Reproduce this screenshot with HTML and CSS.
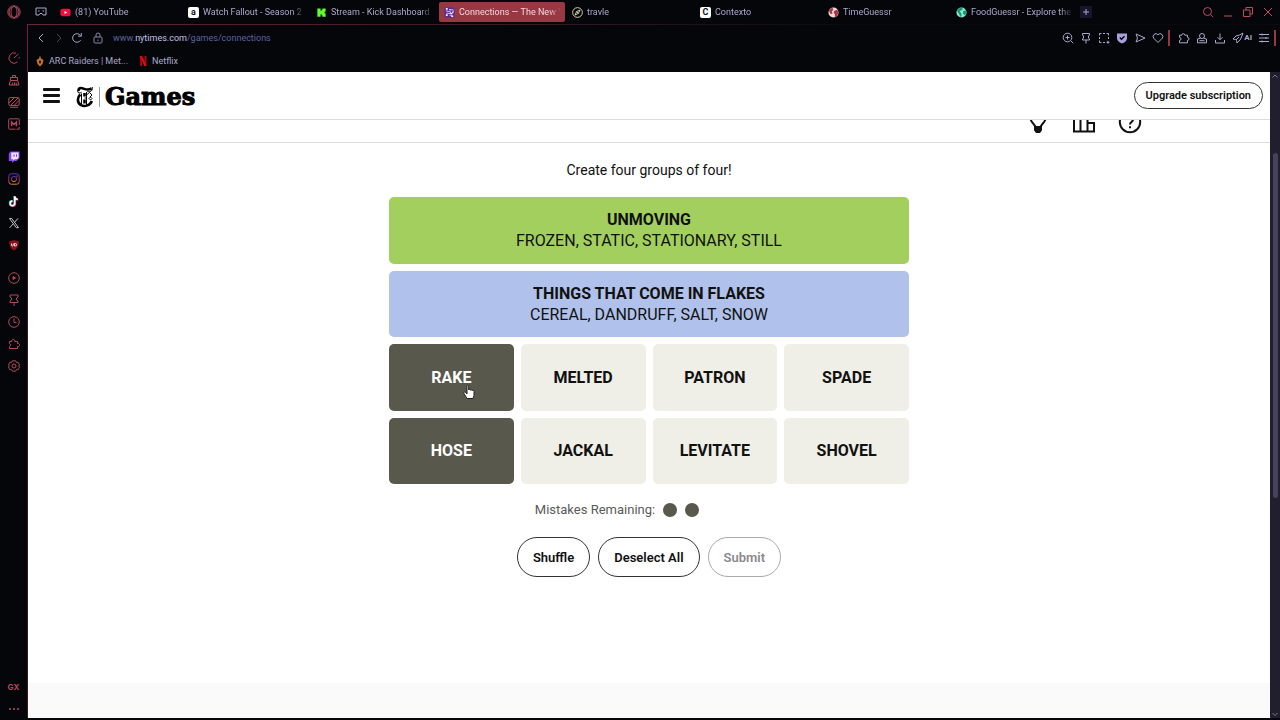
FILE: index.html
```
<!DOCTYPE html>
<html lang="en">
<head>
  <meta charset="UTF-8">
  <meta name="viewport" content="width=device-width, initial-scale=1.0">
  <title>Connections — The New York Times</title>
  <link rel="stylesheet" href="styles.css">
</head>
<body>
  <aside class="sidebar">
    <button class="side-btn opera" aria-label="Menu"><svg viewBox="0 0 14 14"><circle cx="7" cy="7" r="6.2"/><ellipse cx="7" cy="7" rx="3" ry="5.6"/><path d="M5 1.8a6 6 0 0 0 0 10.4M9 1.8a6 6 0 0 1 0 10.4"/></svg></button>
    <div class="side-group">
      <button class="side-btn" aria-label="GX Control"><svg viewBox="0 0 12 12"><path d="M9.5 10A5.2 5.2 0 1 1 8 1.2M6 6l4.5-4M11.2 5v1.5"/></svg></button>
      <button class="side-btn" aria-label="GX Cleaner"><svg viewBox="0 0 12 12"><path d="M4.5 3.5v-2h3v2M2.5 3.5h7v3h-7zM2.5 6.5L1 11h10L9.5 6.5M4 11l.6-2.5M6.5 11V8.5M8.5 11L8 8.5"/></svg></button>
      <button class="side-btn" aria-label="Limiter"><svg viewBox="0 0 12 12"><rect x=".8" y="1.5" width="10.4" height="8" rx="1.5"/><path d="M1 7l5-5M2.5 9.5L10 2M6 9.5l5-5M2 11.3h8"/></svg></button>
      <button class="side-btn" aria-label="Mods"><svg viewBox="0 0 12 12"><path d="M7.5 11.2h-6a.8.8 0 0 1-.8-.8V1.6a.8.8 0 0 1 .8-.8h9a.8.8 0 0 1 .8.8V7M8.5 11.2h2.7V9"/><path class="bold" d="M3.6 8.3V4L6 6.500 8.400 4v4.300"/></svg></button>
    </div>
    <div class="side-group">
      <button class="side-btn" aria-label="Twitch"><svg viewBox="0 0 12 12"><path class="twitch" d="M2.500.5h9v6.800L8.500 10H6.200L4 12v-2H.8V2.500z"/><path class="white" d="M3.300 1.500h7.200v5.300L9 8.200H6.700L5.200 9.500V8.200H3.300z"/><path class="twitch-bars" d="M6 3.300v2.500M8.500 3.300v2.500"/></svg></button>
      <button class="side-btn" aria-label="Instagram"><svg viewBox="0 0 12 12"><defs><linearGradient id="insta" x1="0" y1="0" x2="0" y2="1"><stop offset="0" stop-color="#5a35c0"/><stop offset=".6" stop-color="#b02a70"/><stop offset="1" stop-color="#d08a35"/></linearGradient></defs><g class="insta"><rect x=".8" y=".8" width="10.400" height="10.400" rx="2.500"/><circle cx="6" cy="6" r="2.600"/><circle cx="9" cy="3" r=".3"/></g></svg></button>
      <button class="side-btn" aria-label="TikTok"><svg viewBox="0 0 12 12"><path class="tk-cyan" d="M6.400 1v7.200a2.300 2.300 0 1 1-2.300-2.300M6.400 1.500c.2 1.600 1.300 2.600 3 2.700"/><path class="tk-red" d="M7.200 1.500v7.200a2.300 2.300 0 1 1-2.300-2.300M7.200 2c.2 1.600 1.300 2.600 3 2.700"/><path class="tk-white" d="M6.800 1.200v7.200a2.300 2.300 0 1 1-2.300-2.300M6.800 1.700c.2 1.600 1.300 2.600 3 2.700"/></svg></button>
      <button class="side-btn" aria-label="X"><svg viewBox="0 0 12 12"><g class="x-logo"><path d="M1.500 1.500h2.200l6.800 9.200H8.300zM10 1.300L6.800 5M5.200 6.800L1.700 10.800"/></g></svg></button>
      <button class="side-btn" aria-label="uBlock"><svg viewBox="0 0 12 12"><path class="shield-red" d="M6 .8c1.500 1 3 1.400 4.800 1.400 0 4-.8 7-4.800 9.300C2 9.200 1.200 6.200 1.200 2.200 3 2.200 4.500 1.800 6 .8z"/><path class="shield-mark" d="M3.500 4.500v1.700q0 .8.900.8t.9-.8V4.500M6.500 4.500V7h.8q1.300 0 1.300-1.250T7.300 4.500z"/></svg></button>
    </div>
    <div class="side-group">
      <button class="side-btn" aria-label="Player"><svg viewBox="0 0 12 12"><circle cx="6" cy="6" r="5.300"/><path class="red" d="M5 4.500v3L7.500 6z"/></svg></button>
      <button class="side-btn" aria-label="Pinboards"><svg viewBox="0 0 12 12"><path d="M2 1h8v2L8.500 4v2L10 7v1.500H2V7l1.500-1V4L2 3zM6 8.500V12"/></svg></button>
      <button class="side-btn" aria-label="History"><svg viewBox="0 0 12 12"><circle cx="6" cy="6" r="5.300"/><path d="M6 2.500V6.500h2.500"/></svg></button>
      <button class="side-btn" aria-label="Extensions"><svg viewBox="0 0 12 12"><path d="M1.500 3.500h2.300a1.600 1.600 0 1 1 3 0h2.700v2a1.600 1.600 0 1 1 0 3v2h-8V8.500a1.600 1.600 0 0 0 0-3z"/></svg></button>
      <button class="side-btn" aria-label="Settings"><svg viewBox="0 0 12 12"><path d="M4.500.8h3l.8 1.500 1.900.1L11.500 5l-.8 1 .8 1-1.300 2.600-1.900.1-.8 1.500h-3l-.8-1.500-1.900-.1L.5 7l.8-1-.8-1 1.300-2.600 1.900-.1z"/><circle cx="6" cy="6" r="2"/></svg></button>
    </div>
    <div class="side-group side-bottom">
      <button class="side-btn gx">GX</button>
      <button class="side-btn" aria-label="More"><svg viewBox="0 0 12 12"><path class="dots" d="M2 6h.1M6 6h.1M10 6h.1"/></svg></button>
    </div>
  </aside>

  <div class="browser">
    <div class="tab-bar">
      <svg class="mask-icon" viewBox="0 0 12 12"><path d="M1 2h10v7H8L7 7.500H5L4 9H1z"/><path d="M3 5h1.500M7.500 5H9"/></svg>
      <nav class="tabs">
        <a class="tab" href="#"><svg class="fav" viewBox="0 0 12 12"><rect x=".5" y="2" width="11" height="8" rx="2" fill="#f0103f"/><path d="M5 4.300v3.400L8 6z" fill="#fff"/></svg><span>(81) YouTube</span></a>
        <a class="tab" href="#"><i class="fav amazon">a</i><span>Watch Fallout - Season 2 |</span></a>
        <a class="tab" href="#"><svg class="fav" viewBox="0 0 12 12"><path d="M1.500 1.500H5v2.500h1V3h1V1.500h3.500V5h-1v2h1v3.500H7V9H6V8H5v2.500H1.500z" fill="#5dff2c"/></svg><span>Stream - Kick Dashboard</span></a>
        <a class="tab active" href="#"><svg class="fav" viewBox="0 0 12 12"><rect x=".5" y=".5" width="11" height="11" rx="1" fill="#5c2b91"/><path d="M3 2v3h4v2H3v3M6 3h4v3M6 9h3" stroke="#d5b4ff" fill="none"/><path d="M2 2h2M6 3h1M9 6h1M2 9h2M7 7h2M8 10h2" stroke="#fff" stroke-width="1.600"/></svg><span>Connections — The New Y</span></a>
        <a class="tab" href="#"><svg class="fav" viewBox="0 0 12 12"><g fill="none" stroke="#e6dfb5"><circle cx="6" cy="6" r="5.300"/><path d="M8.700 3.300L7 7 3.300 8.700 5 5zM5 5l2 2"/></g></svg><span>travle</span></a>
        <a class="tab" href="#"><i class="fav contexto">C</i><span>Contexto</span></a>
        <a class="tab" href="#"><svg class="fav" viewBox="0 0 12 12"><circle cx="6" cy="6" r="5.500" fill="#f3d9da"/><path d="M1 4l3-3 2 1-1 2-1 1 1 2-2 1zM7 4l3-1 1.500 3-2 4-2 1V8L6 6z" fill="#a83440"/></svg><span>TimeGuessr</span></a>
        <a class="tab" href="#"><svg class="fav" viewBox="0 0 12 12"><circle cx="6" cy="6" r="5.500" fill="#8be8d8"/><path d="M1 4l3-3 3 0 0 2-2 1-1 1 2 2 0 3-1 1-2-4zM8 4l3 0 .5 3-2 2-2-2z" fill="#169a68"/></svg><span>FoodGuessr - Explore the w</span></a>
      </nav>
      <button class="new-tab" aria-label="New tab"><svg viewBox="0 0 12 12"><path d="M6 3v6M3 6h6"/></svg></button>
      <div class="window-buttons">
        <button aria-label="Search tabs"><svg viewBox="0 0 12 12"><circle cx="5.500" cy="5.500" r="4"/><path d="M8.500 8.500L11 11"/></svg></button>
        <button aria-label="Minimize"><svg viewBox="0 0 12 12"><path d="M2 10h8"/></svg></button>
        <button aria-label="Restore"><svg viewBox="0 0 12 12"><path d="M1.500 4h6.500v6.500H1.500zM4 4V1.500h6.500V8H8"/></svg></button>
        <button aria-label="Close"><svg viewBox="0 0 12 12"><path d="M2 2l8 8M10 2l-8 8"/></svg></button>
      </div>
    </div>

    <div class="toolbar">
      <button aria-label="Back"><svg viewBox="0 0 12 12"><path d="M8 2L4 6l4 4"/></svg></button>
      <button class="dim" aria-label="Forward"><svg viewBox="0 0 12 12"><path d="M4 2l4 4-4 4"/></svg></button>
      <button aria-label="Reload"><svg viewBox="0 0 12 12"><path d="M9.600 8.200A4.300 4.300 0 1 1 9.500 3.600M10.300 1v3.200H7.100"/></svg></button>
      <a class="address" href="#"><svg viewBox="0 0 12 12"><rect x="2" y="5" width="8" height="6" rx="1"/><path d="M4 5V3a2 2 0 0 1 4 0v2M6 7.500v1.500"/></svg><span>www.<b>nytimes.com</b>/games/connections</span></a>
      <div class="tools">
        <button aria-label="Zoom"><svg viewBox="0 0 12 12"><circle cx="5.500" cy="5.500" r="4.300"/><path d="M8.700 8.700l2.500 2.500M3.500 5.500h4M5.500 3.500v4"/></svg></button>
        <button aria-label="Pin"><svg viewBox="0 0 12 12"><path d="M2.500 1.500h7v1.500L8.500 4v2l1 1v1h-7V7l1-1V4l-1-1zM6 8v3.500"/></svg></button>
        <button aria-label="Snapshot"><svg viewBox="0 0 12 12"><path d="M1.500 3.500v-2h2M5 1.500h2M8.500 1.500h2v2M1.500 5v2M10.500 5v2M1.500 8.500v2h2M5 10.500h2M8.500 10.300h3M10 8.800v3"/></svg></button>
        <button aria-label="Shield"><svg viewBox="0 0 12 12"><path class="shield" d="M1 1.500h10V6c0 3-2.500 4.500-5 5.500C3.500 10.500 1 9 1 6z"/><path class="tick" d="M3.800 5.500l1.700 1.700 3-3"/></svg></button>
        <button aria-label="Send"><svg viewBox="0 0 12 12"><path d="M2 2l9 4-9 4 1.500-4z"/></svg></button>
        <button aria-label="Favorite"><svg viewBox="0 0 12 12"><path d="M6 10.500L1.800 6.300a2.700 2.700 0 0 1 4.200-3.600 2.700 2.700 0 0 1 4.200 3.600z"/></svg></button>
        <i class="bar"></i>
        <button aria-label="Extensions"><svg viewBox="0 0 12 12"><path d="M1.500 3.200h2.300a1.500 1.500 0 1 1 3 0h2.700v2.200a1.500 1.500 0 1 1 0 3v2.400h-8V8.400a1.500 1.500 0 0 0 0-3z"/></svg></button>
        <button aria-label="Profile"><svg viewBox="0 0 12 12"><circle cx="6" cy="4" r="2.500"/><path d="M4.500 6.200L1.500 7v3.800h9V7l-3-.8M3.500 8.700h5"/></svg></button>
        <button aria-label="Downloads"><svg viewBox="0 0 12 12"><path d="M6 1.500v6M3.500 5.200L6 7.700l2.500-2.500M1.500 8v3h9V8"/></svg></button>
        <button class="ai"><svg viewBox="0 0 12 12"><path d="M1 7l3-3 3.500-1L11 1 9.500 5 8 8l-3 3-.5-2.500-1-1zM4 8l3-3"/></svg>AI</button>
        <button aria-label="Settings"><svg viewBox="0 0 12 12"><path d="M1 2.500h10M1 6h10M1 9.500h10M4 1.500v2M8 5v2M4 8.500v2"/></svg></button>
        <i class="bar"></i>
      </div>
    </div>

    <nav class="bookmarks">
      <a href="#"><svg viewBox="0 0 12 12"><path d="M6 .5l1 3L9.500 5l-1 4L6 11.500 3.500 9l-1-4L5 3.500z" fill="#c9702c"/><path d="M6 5l1.300 2L6 9 4.700 7z" fill="#1c1208"/></svg>ARC Raiders | Met...</a>
      <a href="#"><svg viewBox="0 0 12 12"><path d="M3 1h2v10H3zM7.500 1h2v10h-2z" fill="#a8070f"/><path d="M3 1h2.200l4.300 10H7.300z" fill="#e50914"/></svg>Netflix</a>
    </nav>

    <div class="viewport">
      <div class="page">
        <header class="site-header">
          <button class="hamburger" aria-label="Open menu"><i></i><i></i><i></i></button>
          <a class="logo" href="#" aria-label="New York Times Games">
            <svg viewBox="0 0 18 22">
              <path class="stroke-thick" d="M2.500 5C2.200 1.800 5 1.600 7.500 2.600S13 4.200 15.500 2.400"/>
              <path class="stroke-thin" d="M1.700 5C1.500 7.200 4 7.600 5.500 6.300M16.200 1c.8 3.500-1.500 5.500-5 4.300"/>
              <path class="stroke-thick" d="M4.300 8.500C1 11.500 1 17 5 19.200c4 2 9.500-.2 10.800-4.200"/>
              <path class="stroke-thin" d="M5.500 7.500v11M10.500 6v13M11 8.500l2.500-2 2.500 2.500-2 2M8.500 12h2M13 12.500l1.500-1.500 1.500 1.500-1.500 1.500z"/>
              <path class="stroke-thick" d="M8.500 7v3.500M8.500 13.500v4"/>
            </svg>
            <i></i><span>Games</span>
          </a>
          <button class="pill upgrade">Upgrade subscription</button>
        </header>

        <div class="game-tools">
          <button aria-label="Hints"><svg viewBox="0 0 24 24"><path d="M10 19c0-5-5.500-5.500-5.500-11a7.500 7.500 0 0 1 15 0c0 5.500-5.500 6-5.500 11z"/><path class="solid" d="M9 17h6v3l-1.500 2h-3L9 20z"/></svg></button>
          <button aria-label="Statistics"><svg viewBox="0 0 24 24"><path d="M2 8h6.500v13.500H2zM8.500 3h7v18.500h-7zM15.500 13H22v8.500h-6.500z"/></svg></button>
          <button aria-label="Help"><svg viewBox="0 0 24 24"><circle cx="12" cy="12" r="10.200"/><path d="M9 9.500c0-4 6-4 6 0 0 2.500-3 2.500-3 5M12 16.300v2"/></svg></button>
        </div>

        <main class="game">
          <p class="intro">Create four groups of four!</p>
          <div class="board">
            <section class="solved green"><h2>UNMOVING</h2><p>FROZEN, STATIC, STATIONARY, STILL</p></section>
            <section class="solved blue"><h2>THINGS THAT COME IN FLAKES</h2><p>CEREAL, DANDRUFF, SALT, SNOW</p></section>
            <button class="card selected" aria-pressed="true">RAKE
              <svg class="cursor" viewBox="0 0 12 16"><path d="M4 14.500L1 9.500c-.8-1.500.8-2 1.600-1L4 10V1.800c0-1.400 1.700-1.400 1.700 0V6c.3-1 1.700-.8 1.700.2.400-.8 1.700-.6 1.700.4.400-.7 1.900-.4 1.900.8v4L10 14.500z"/></svg>
            </button>
            <button class="card">MELTED</button>
            <button class="card">PATRON</button>
            <button class="card">SPADE</button>
            <button class="card selected" aria-pressed="true">HOSE</button>
            <button class="card">JACKAL</button>
            <button class="card">LEVITATE</button>
            <button class="card">SHOVEL</button>
          </div>
          <div class="mistakes"><span>Mistakes Remaining:</span><div class="bubbles"><i></i><i></i></div></div>
          <div class="actions">
            <button class="pill">Shuffle</button>
            <button class="pill">Deselect All</button>
            <button class="pill" disabled>Submit</button>
          </div>
        </main>
        <footer class="site-footer"></footer>
      </div>
      <div class="scrollbar">
        <svg viewBox="0 0 8 8"><path d="M1.500 5.500L4 3l2.500 2.500"/></svg>
        <div class="track"><div class="thumb"></div></div>
        <svg viewBox="0 0 8 8"><path d="M1.500 3L4 5.500 6.500 3"/></svg>
      </div>
    </div>
  </div>
</body>
</html>
```
FILE: styles.css
```
/* Global Styles */
* { box-sizing: border-box; }
body {
  margin: 0;
  display: flex;
  height: 100vh;
  overflow: hidden;
  background: #05060a;
  color: #aaa8cc;
  font-family: Roboto, Inter, sans-serif;
}
button {
  font: inherit;
  color: inherit;
  background: none;
  border: none;
  padding: 0;
  cursor: pointer;
}
a { color: inherit; text-decoration: none; }
h2, p { margin: 0; }
svg {
  display: block;
  flex: none;
  fill: none;
  stroke: currentColor;
}

/* Sidebar */
.sidebar {
  width: 27px;
  flex: none;
  display: flex;
  flex-direction: column;
  color: #b04a5c;
}
.side-btn {
  display: flex;
  width: 27px;
  height: 22px;
  align-items: center;
  justify-content: center;
}
.side-btn svg { width: 12px; height: 12px; }
.side-btn.opera { height: 24px; margin-bottom: 23px; }
.side-btn.opera svg { width: 14px; height: 14px; }
.side-group { margin-bottom: 11px; }
.side-bottom { margin-top: auto; margin-bottom: 0; }
.gx { font-size: 8px; font-weight: 700; font-family: Inter, sans-serif; }
.bold { stroke-width: 1.5; }
.dots { stroke-width: 2; stroke-linecap: round; }
.red { fill: currentColor; }
.white { fill: #eee5ff; stroke: none; }
.twitch { fill: #8a48f0; stroke: none; }
.twitch-bars { stroke: #7a3be0; }
.insta { stroke: url(#insta); }
.tk-cyan { stroke: #25d8d4; stroke-width: 2; }
.tk-red { stroke: #e0305a; stroke-width: 2; }
.tk-white { stroke: #fff; stroke-width: 1.5; }
.x-logo { stroke: #c4c4c8; }
.shield-red { fill: #8c0f1c; stroke: none; }
.shield-mark { stroke: #f0d8da; }

/* Tabs */
.browser {
  flex: 1;
  min-width: 0;
  display: flex;
  flex-direction: column;
}
.tab-bar {
  display: flex;
  align-items: center;
  height: 24px;
  padding: 0 6px 0 8px;
  font-size: 9px;
}
.mask-icon { width: 12px; height: 12px; margin-right: 8px; }
.tabs {
  flex: 0 1 1022px;
  min-width: 0;
  display: flex;
  gap: 2px;
}
.tab {
  flex: 1;
  min-width: 0;
  display: flex;
  align-items: center;
  gap: 4px;
  height: 20px;
  padding: 0 4px 0 5px;
  border-radius: 2px;
}
.tab span {
  overflow: hidden;
  white-space: nowrap;
  flex: 1;
  -webkit-mask-image: linear-gradient(to right, #000 88%, transparent);
  mask-image: linear-gradient(to right, #000 88%, transparent);
}
.tab.active { background: #983843; color: #f3d6dc; }
.fav {
  width: 11px;
  height: 11px;
  flex: none;
  stroke: none;
}
.amazon, .contexto {
  background: #fff;
  color: #111;
  border-radius: 2px;
  font-size: 9px;
  line-height: 11px;
  font-style: normal;
  font-weight: 700;
  text-align: center;
}
.new-tab {
  width: 12px;
  height: 12px;
  margin-left: 3px;
  background: #16152c;
}
.window-buttons {
  display: flex;
  gap: 8px;
  margin-left: auto;
  color: #c04a60;
}
.window-buttons svg { width: 12px; height: 12px; }

/* Toolbar */
.toolbar {
  display: flex;
  align-items: center;
  gap: 6px;
  height: 26px;
  padding: 0 2px 0 7px;
  border-top: 1px solid;
  border-left: 1px solid;
  border-image: linear-gradient(to right, #6a2436, #3c1822 40%, #0c0a10 65%) 1;
}
.toolbar svg { width: 12px; height: 12px; }
.dim { opacity: 0.4; }
.address {
  display: flex;
  align-items: center;
  gap: 9px;
  margin-left: 3px;
  font-size: 9px;
  color: #5c64a0;
}
.address svg { color: #8886a8; }
.address b { font-weight: 400; color: #c0c0e4; }
.tools {
  display: flex;
  align-items: center;
  gap: 6px;
  margin-left: auto;
}
.bar { width: 2px; height: 16px; margin: 0 2px 0 -2px; background: #983843; }
.shield { fill: #aaa0e0; stroke: none; }
.tick { stroke: #05060a; stroke-width: 1.5; }
.ai {
  display: flex;
  align-items: center;
  font-size: 8px;
  font-weight: 700;
}
.bookmarks {
  display: flex;
  gap: 9px;
  height: 22px;
  padding: 0 0 1px 6px;
  border-left: 1px solid #6a2436;
  font-size: 9px;
}
.bookmarks a { display: flex; align-items: center; gap: 3px; }
.bookmarks svg { width: 12px; height: 12px; stroke: none; }

/* Page */
.viewport {
  flex: 1;
  min-height: 0;
  display: flex;
  margin-bottom: 2px;
  border-left: 1px solid #3c1822;
}
.page {
  flex: 1;
  display: flex;
  flex-direction: column;
  background: #fff;
  color: #111;
}
.site-header {
  display: flex;
  align-items: center;
  height: 48px;
  padding: 0 7px 0 15px;
  border-bottom: 1px solid #dcdcdc;
}
.hamburger {
  display: flex;
  flex-direction: column;
  gap: 3px;
  width: 17px;
  margin-right: 16px;
}
.hamburger i { height: 3px; width: 100%; background: #111; border-radius: 1px; }
.logo {
  display: flex;
  align-items: center;
  gap: 5px;
  padding-top: 2px;
  color: #000;
  font-family: "DejaVu Serif", serif;
  font-size: 24px;
  font-weight: 700;
  line-height: 28px;
}
.logo svg { width: 18px; height: 22px; }
.logo i { width: 1px; height: 20px; background: #999; }
.logo span { -webkit-text-stroke: 1px #000; }
.stroke-thick { stroke-width: 2.6; }
.stroke-thin { stroke-width: 1; }
.pill {
  height: 40px;
  padding: 0 15px;
  border: 1px solid #333;
  border-radius: 20px;
  font-size: 13px;
  font-weight: 600;
}
.pill:disabled { color: #8a8a8a; border-color: #aaa; }
.upgrade { height: 27px; padding: 0 11px; margin-left: auto; font-size: 11px; }
.game-tools {
  display: flex;
  align-items: flex-end;
  justify-content: flex-end;
  gap: 22px;
  height: 23px;
  padding: 0 128px 8px 0;
  overflow: hidden;
  border-bottom: 1px solid #dcdcdc;
}
.game-tools svg { width: 24px; height: 24px; stroke-width: 2; }
.solid { fill: currentColor; }

/* Game */
.game {
  display: flex;
  flex-direction: column;
  align-items: center;
  padding: 17px 16px;
}
.intro { font-size: 14px; line-height: 20px; margin-bottom: 17px; }
.board {
  display: grid;
  grid-template-columns: repeat(4, 1fr);
  grid-auto-rows: 1fr;
  gap: 7px;
  width: 100%;
  max-width: 520px;
  min-height: 287px;
}
.solved {
  grid-column: 1 / -1;
  display: flex;
  flex-direction: column;
  justify-content: center;
  border-radius: 5px;
  text-align: center;
  font-size: 16px;
  line-height: 21px;
}
.solved h2 { font-size: 16px; font-weight: 700; }
.green { background: #a3cf5f; }
.blue { background: #b0c2eb; }
.card {
  position: relative;
  background: #efefe7;
  border-radius: 5px;
  font-size: 16px;
  font-weight: 700;
}
.card.selected { background: #59584c; color: #fff; }
.cursor {
  position: absolute;
  left: 74px;
  top: 40px;
  width: 12px;
  height: 16px;
  fill: #fff;
  stroke: #222;
}
.mistakes {
  display: flex;
  align-items: center;
  gap: 8px;
  margin: 16px 0 17px;
  padding-right: 64px;
  font-size: 13px;
  line-height: 20px;
  color: #5a5a5a;
}
.bubbles { display: flex; gap: 8px; }
.bubbles i { width: 14px; height: 14px; border-radius: 50%; background: #59584c; }
.actions { display: flex; gap: 8px; }
.site-footer { margin-top: auto; height: 35px; flex: none; background: #fafafa; }

/* Scrollbar */
.scrollbar {
  width: 10px;
  flex: none;
  display: flex;
  flex-direction: column;
  align-items: center;
  background: #211f2d;
  color: #77748c;
}
.scrollbar svg { width: 8px; height: 8px; }
.track { flex: 1; padding-top: 73px; }
.thumb { width: 5px; height: 62%; background: #454259; border-radius: 3px; }
```
